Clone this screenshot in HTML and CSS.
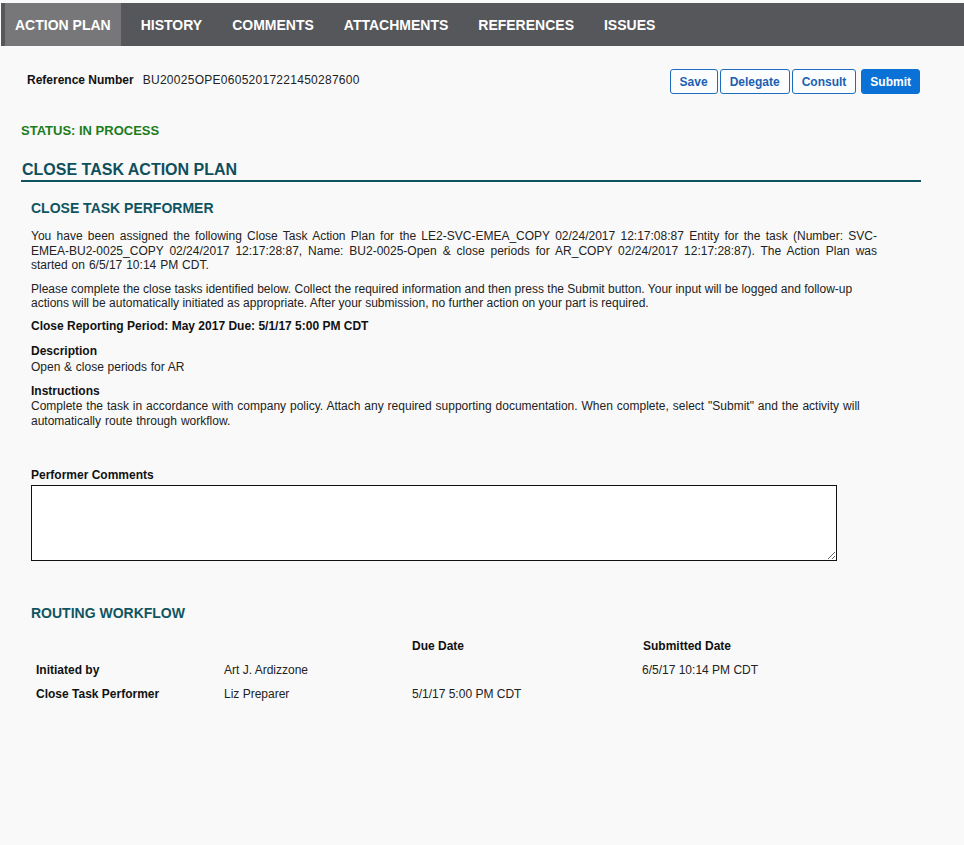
FILE: index.html
```html
<!DOCTYPE html>
<html lang="en">
<head>
<meta charset="utf-8">
<title>Close Task Action Plan</title>
<link rel="stylesheet" href="styles.css">
</head>
<body>
<nav class="tabs">
  <a class="tab active">ACTION PLAN</a>
  <a class="tab">HISTORY</a>
  <a class="tab">COMMENTS</a>
  <a class="tab">ATTACHMENTS</a>
  <a class="tab">REFERENCES</a>
  <a class="tab">ISSUES</a>
</nav>
<main class="page">
  <div class="toolbar">
    <div class="ref"><span class="ref-label">Reference Number</span><span class="ref-value">BU20025OPE06052017221450287600</span></div>
    <div class="actions">
      <button class="btn">Save</button>
      <button class="btn">Delegate</button>
      <button class="btn">Consult</button>
      <button class="btn primary">Submit</button>
    </div>
  </div>
  <div class="status">STATUS: IN PROCESS</div>
  <h1 class="plan-title">CLOSE TASK ACTION PLAN</h1>
  <section class="section">
    <h2 class="section-title">CLOSE TASK PERFORMER</h2>
    <p class="para para-1">You have been assigned the following Close Task Action Plan for the LE2-SVC-EMEA_COPY 02/24/2017 12:17:08:87 Entity for the task (Number: SVC-EMEA-BU2-0025_COPY 02/24/2017 12:17:28:87, Name: BU2-0025-Open &amp; close periods for AR_COPY 02/24/2017 12:17:28:87). The Action Plan was started on 6/5/17 10:14 PM CDT.</p>
    <p class="para para-2">Please complete the close tasks identified below. Collect the required information and then press the Submit button. Your input will be logged and follow-up actions will be automatically initiated as appropriate. After your submission, no further action on your part is required.</p>
    <p class="para period">Close Reporting Period: May 2017 Due: 5/1/17 5:00 PM CDT</p>
    <div class="field desc">
      <div class="field-label">Description</div>
      <div class="field-value">Open &amp; close periods for AR</div>
    </div>
    <div class="field instr">
      <div class="field-label">Instructions</div>
      <div class="field-text">Complete the task in accordance with company policy. Attach any required supporting documentation. When complete, select "Submit" and the activity will automatically route through workflow.</div>
    </div>
    <label class="comments-label" for="comments">Performer Comments</label>
    <textarea id="comments" class="comments"></textarea>
    <h2 class="section-title routing-title">ROUTING WORKFLOW</h2>
    <table class="routing">
      <colgroup><col class="c1"><col class="c2"><col class="c3"><col class="c4"></colgroup>
      <thead>
        <tr><th></th><th></th><th>Due Date</th><th>Submitted Date</th></tr>
      </thead>
      <tbody>
        <tr><th>Initiated by</th><td>Art J. Ardizzone</td><td></td><td class="sub">6/5/17 10:14 PM CDT</td></tr>
        <tr><th>Close Task Performer</th><td>Liz Preparer</td><td>5/1/17 5:00 PM CDT</td><td class="sub"></td></tr>
      </tbody>
    </table>
  </section>
</main>
</body>
</html>
```
FILE: styles.css
```css
* { box-sizing: border-box; }
html, body { margin: 0; padding: 0; }
body {
  background: #f9f9f9;
  font-family: "Liberation Sans", Arial, sans-serif;
  font-size: 12px;
  color: #222;
  padding-top: 3px;
}
.tabs {
  display: flex;
  gap: 10px;
  height: 43px;
  margin-left: 1px;
  padding-left: 4px;
  background: #56575b;
}
.tab {
  display: block;
  padding: 2px 10px 0;
  line-height: 41px;
  font-size: 14px;
  font-weight: bold;
  color: #fff;
  cursor: pointer;
}
.tab.active { background: #777779; }

.page {
  width: 900px;
  margin-left: 21px;
}
.toolbar {
  display: flex;
  justify-content: space-between;
  align-items: flex-start;
  margin-top: 23px;
  padding-left: 6px;
  padding-right: 1px;
}
.ref { line-height: 16px; padding-top: 3px; }
.ref-label { font-weight: bold; margin-right: 9px; color: #111; }
.ref-value { letter-spacing: 0.27px; }
.actions { display: flex; gap: 2px; }
.btn {
  height: 25px;
  padding: 0 9px;
  border: 1px solid #1f6dbd;
  border-radius: 3px;
  background: #fcfdff;
  color: #1b5fb1;
  font-family: inherit;
  font-size: 12px;
  font-weight: bold;
}
.btn.primary {
  margin-left: 3px;
  padding: 0 8px;
  background: #0a72d7;
  border-color: #0a72d7;
  color: #fff;
}
.status {
  margin-top: 29px;
  line-height: 16px;
  font-size: 13px;
  font-weight: bold;
  color: #1b7c1b;
}
.plan-title {
  margin: 22px 0 0;
  padding: 0 0 1px 1px;
  line-height: 18px;
  font-size: 16px;
  font-weight: bold;
  color: #0f4f5c;
  border-bottom: 2px solid #0f5561;
}
.section {
  padding: 0 44px 0 10px;
}
.section-title {
  margin: 18px 0 0;
  line-height: 16px;
  font-size: 14px;
  font-weight: bold;
  color: #0f5561;
}
.para {
  margin: 13px 0 0;
  line-height: 14.5px;
}
.para-1 { text-align: justify; word-spacing: 0.6px; }
.para-2 { margin-top: 9px; }
.period { margin-top: 8px; font-weight: bold; color: #111; }
.field { line-height: 16px; }
.desc { margin-top: 10px; }
.instr { margin-top: 8px; }
.field-label { font-weight: bold; color: #111; }
.field-value { word-spacing: 0.4px; }
.field-text { line-height: 15px; word-spacing: 0.6px; }
.comments-label {
  display: block;
  margin-top: 38px;
  line-height: 16px;
  font-weight: bold;
  color: #111;
}
.comments {
  display: block;
  width: 806px;
  height: 76px;
  margin-top: 2px;
  border: 1px solid #111;
  background: #fff;
  resize: both;
}
.routing-title { margin-top: 44px; }
.routing {
  margin-top: 13px;
  border-collapse: collapse;
  table-layout: fixed;
  width: 846px;
}
.routing .c1, .routing .c2 { width: 188px; }
.routing .c3 { width: 231px; }
.routing th, .routing td {
  height: 24px;
  padding: 0 5px;
  text-align: left;
  vertical-align: middle;
  white-space: nowrap;
}
.routing th { font-weight: bold; color: #111; }
.routing td.sub { padding-left: 4px; }
```
